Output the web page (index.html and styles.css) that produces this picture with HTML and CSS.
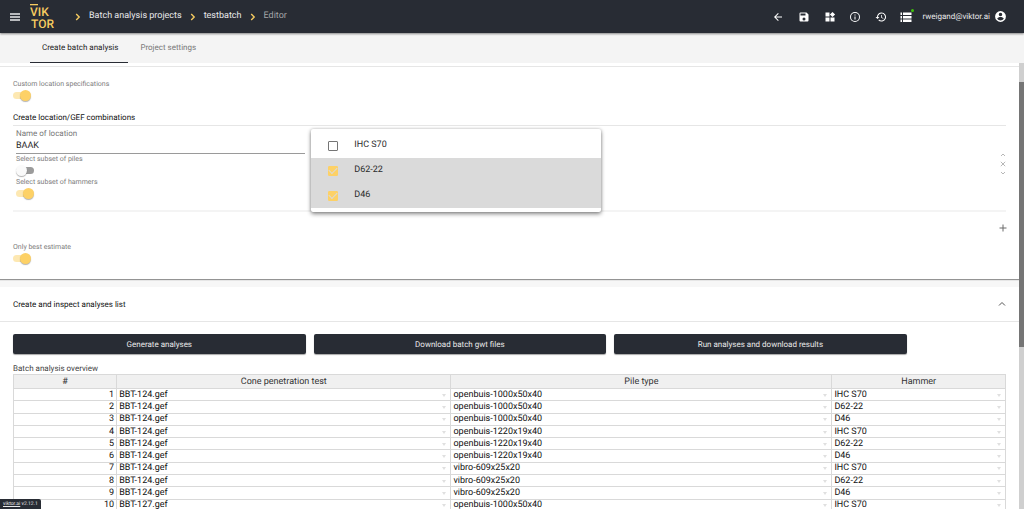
FILE: index.html
```html
<!DOCTYPE html>
<html lang="en">
<head>
<meta charset="utf-8">
<title>VIKTOR - testbatch</title>
<link rel="stylesheet" href="styles.css">
</head>
<body>
<header class="topbar">
  <button class="icon-btn menu-btn" aria-label="Menu"><svg viewBox="0 0 10 8"><path d="M0 1h10M0 4h10M0 7h10" stroke="#e8e9ea" stroke-width="1.3"/></svg></button>
  <a class="logo" href="#" aria-label="VIKTOR"><svg viewBox="0 0 28 32"><rect x="1" y="3" width="8" height="1.300"/><text x="1" y="15">VIK</text><text x="2" y="27">TOR</text></svg></a>
  <nav class="crumbs">
    <svg class="chev" viewBox="0 0 6 8"><path d="M1.200 1l3 3-3 3"/></svg>
    <a href="#">Batch analysis projects</a>
    <svg class="chev" viewBox="0 0 6 8"><path d="M1.200 1l3 3-3 3"/></svg>
    <a href="#">testbatch</a>
    <svg class="chev" viewBox="0 0 6 8"><path d="M1.200 1l3 3-3 3"/></svg>
    <span class="current">Editor</span>
  </nav>
  <div class="tools">
    <button class="icon-btn" aria-label="Back"><svg viewBox="0 0 24 24"><path d="M20 11H7.830l5.590-5.590L12 4l-8 8 8 8 1.410-1.410L7.830 13H20v-2z"/></svg></button>
    <button class="icon-btn" aria-label="Save"><svg viewBox="0 0 24 24"><path fill-rule="evenodd" d="M17 3H5a2 2 0 0 0-2 2v14a2 2 0 0 0 2 2h14a2 2 0 0 0 2-2V7l-4-4zm-5 16a3 3 0 1 1 0-6 3 3 0 0 1 0 6zm3-10H5V5h10v4z"/></svg></button>
    <button class="icon-btn" aria-label="Apps"><svg viewBox="0 0 24 24"><path d="M3 3h8v8H3zM3 13h8v8H3zM13 13h8v8h-8zM17 1.800L22.200 7 17 12.200 11.800 7z"/></svg></button>
    <button class="icon-btn" aria-label="Info"><svg viewBox="0 0 24 24"><path fill-rule="evenodd" d="M11 7h2v2h-2zm0 4h2v6h-2zm1-9a10 10 0 1 0 0 20 10 10 0 0 0 0-20zm0 18a8 8 0 1 1 0-16 8 8 0 0 1 0 16z"/></svg></button>
    <button class="icon-btn" aria-label="History"><svg viewBox="0 0 24 24"><path d="M13 3a9 9 0 0 0-9 9H1l3.890 3.890.070.140L9 12H6a7 7 0 1 1 2.060 4.940l-1.420 1.420A9 9 0 1 0 13 3zm-1 5v5l4.280 2.540.720-1.210-3.500-2.080V8H12z"/></svg></button>
    <button class="icon-btn jobs" aria-label="Jobs"><svg viewBox="0 0 24 24"><path d="M1 3h3v5H1zM6 3h17v5H6zM1 10h3v5H1zM6 10h17v5H6zM1 17h3v5H1zM6 17h17v5H6z"/></svg><span class="dot"></span></button>
  </div>
  <button class="account">rweigand@viktor.ai <svg viewBox="0 0 24 24"><path d="M12 2a10 10 0 1 0 0 20 10 10 0 0 0 0-20zm0 3a3 3 0 1 1 0 6.500 3 3 0 0 1 0-6.500zm0 14.200a7.200 7.200 0 0 1-6-3.220c.030-1.990 4-3.080 6-3.080s5.970 1.090 6 3.080a7.200 7.200 0 0 1-6 3.220z"/></svg></button>
</header>

<nav class="tabs">
  <a class="tab active" href="#">Create batch analysis</a>
  <a class="tab" href="#">Project settings</a>
</nav>

<div class="viewport">
  <main class="content">
    <section class="card">
      <div class="card-body">
        <label class="small" for="custom">Custom location specifications</label>
        <input class="toggle" id="custom" type="checkbox" checked>

        <h2 class="heading">Create location/GEF combinations</h2>
        <div class="row">
          <div class="fields">
            <div class="field">
              <label class="field-label" for="loc">Name of location</label>
              <input class="text" id="loc" type="text" value="BAAK">
              <label class="small" for="piles">Select subset of piles</label>
              <input class="toggle" id="piles" type="checkbox">
              <label class="small" for="hammers">Select subset of hammers</label>
              <input class="toggle" id="hammers" type="checkbox" checked>
            </div>
            <div class="field">
              <div class="menu">
                <label class="option"><input class="check" type="checkbox">IHC S70</label>
                <label class="option selected"><input class="check" type="checkbox" checked>D62-22</label>
                <label class="option selected"><input class="check" type="checkbox" checked>D46</label>
              </div>
            </div>
          </div>
          <div class="row-actions">
            <button class="icon-btn" aria-label="Move up"><svg viewBox="0 0 6 6"><path d="M1 4L3 2l2 2"/></svg></button>
            <button class="icon-btn" aria-label="Remove"><svg viewBox="0 0 6 6"><path d="M.8.8l4.400 4.400M5.200.8L.8 5.200"/></svg></button>
            <button class="icon-btn" aria-label="Move down"><svg viewBox="0 0 6 6"><path d="M1 2l2 2 2-2"/></svg></button>
          </div>
        </div>
        <button class="icon-btn add" aria-label="Add row"><svg viewBox="0 0 8 8"><path d="M4 .5v7M.5 4h7"/></svg></button>

        <label class="small" for="best">Only best estimate</label>
        <input class="toggle" id="best" type="checkbox" checked>
      </div>
    </section>

    <section class="card">
      <header class="card-head">
        <h2 class="title">Create and inspect analyses list</h2>
        <button class="icon-btn collapse" aria-label="Collapse"><svg viewBox="0 0 8 8"><path d="M1 5.500l3-3 3 3"/></svg></button>
      </header>
      <div class="list-body">
        <div class="buttons">
          <button class="primary">Generate analyses</button>
          <button class="primary">Download batch gwt files</button>
          <button class="primary">Run analyses and download results</button>
        </div>
        <table class="grid">
          <caption>Batch analysis overview</caption>
          <colgroup><col class="c-num"><col class="c-cpt"><col class="c-pile"><col class="c-hammer"></colgroup>
          <thead><tr><th>#</th><th>Cone penetration test</th><th>Pile type</th><th>Hammer</th></tr></thead>
          <tbody>
            <tr><td>1</td><td class="dd">BBT-124.gef</td><td class="dd">openbuis-1000x50x40</td><td class="dd">IHC S70</td></tr>
            <tr><td>2</td><td class="dd">BBT-124.gef</td><td class="dd">openbuis-1000x50x40</td><td class="dd">D62-22</td></tr>
            <tr><td>3</td><td class="dd">BBT-124.gef</td><td class="dd">openbuis-1000x50x40</td><td class="dd">D46</td></tr>
            <tr><td>4</td><td class="dd">BBT-124.gef</td><td class="dd">openbuis-1220x19x40</td><td class="dd">IHC S70</td></tr>
            <tr><td>5</td><td class="dd">BBT-124.gef</td><td class="dd">openbuis-1220x19x40</td><td class="dd">D62-22</td></tr>
            <tr><td>6</td><td class="dd">BBT-124.gef</td><td class="dd">openbuis-1220x19x40</td><td class="dd">D46</td></tr>
            <tr><td>7</td><td class="dd">BBT-124.gef</td><td class="dd">vibro-609x25x20</td><td class="dd">IHC S70</td></tr>
            <tr><td>8</td><td class="dd">BBT-124.gef</td><td class="dd">vibro-609x25x20</td><td class="dd">D62-22</td></tr>
            <tr><td>9</td><td class="dd">BBT-124.gef</td><td class="dd">vibro-609x25x20</td><td class="dd">D46</td></tr>
            <tr><td>10</td><td class="dd">BBT-127.gef</td><td class="dd">openbuis-1000x50x40</td><td class="dd">IHC S70</td></tr>
          </tbody>
        </table>
      </div>
    </section>
  </main>
  <div class="scrollbar"><div class="thumb"></div></div>
</div>

<footer class="version"><a href="#">viktor.ai</a> v2.12.1</footer>
</body>
</html>
```
FILE: styles.css
```css
* { box-sizing: border-box; }

body {
  margin: 0;
  height: 100vh;
  display: flex;
  flex-direction: column;
  overflow: hidden;
  font-family: Roboto, "Liberation Sans", sans-serif;
  font-size: 8px;
  line-height: 11px;
  text-rendering: geometricPrecision;
  color: #2b2b2b;
  background: #f7f7f7;
}

button, input { font: inherit; color: inherit; margin: 0; padding: 0; text-rendering: inherit; }
button { border: 0; background: none; cursor: pointer; }
a { color: inherit; text-decoration: none; }
h2 { margin: 0; font-size: 8px; font-weight: 400; color: #111; }
svg { display: block; }

/* Top bar */
.topbar {
  flex: none;
  display: flex;
  align-items: center;
  height: 33px;
  padding: 0 17px 0 10px;
  background: #282c34;
  color: #e8e9ea;
  box-shadow: 0 1px 2px rgba(0, 0, 0, .45);
  position: relative;
  z-index: 2;
}
.menu-btn svg { width: 10px; height: 8px; }
.logo { margin-left: 9px; }
.logo svg { width: 28px; height: 32px; fill: #f6cb60; font-size: 12px; font-weight: 500; }
.crumbs {
  display: flex;
  align-items: center;
  gap: 8px;
  margin-left: 18px;
  font-size: 9px;
  line-height: 13px;
}
.chev { width: 6px; height: 8px; fill: none; stroke: #f6cb60; stroke-width: 1.4; }
.current { color: #a2a4a8; }
.tools {
  display: flex;
  justify-content: space-between;
  width: 142px;
  margin-left: auto;
  fill: #fff;
}
.tools .icon-btn { width: 14px; }
.tools svg { width: 14px; height: 14px; padding: 1px; }
.jobs { position: relative; }
.dot {
  position: absolute;
  top: -1px;
  right: -1px;
  width: 3px;
  height: 3px;
  border-radius: 50%;
  background: #3fc20a;
}
.account {
  display: flex;
  align-items: center;
  gap: 4px;
  margin-left: 9px;
}
.account svg { width: 13px; height: 13px; fill: #fff; }

/* Tabs */
.tabs {
  flex: none;
  display: flex;
  height: 30px;
  padding-left: 30px;
  background: #f4f4f4;
  color: #777;
}
.tab {
  padding: 9px 10px 0 12px;
  border-bottom: 1px solid transparent;
}
.tab.active { color: #222; border-color: #282c34; }

/* Scrolling area */
.viewport { flex: 1; min-height: 0; display: flex; }
.content { flex: 1; min-width: 0; overflow: hidden; }
.scrollbar { width: 5px; padding-top: 19px; background: #cfcfcf; }
.thumb { height: 62%; background: #757575; }

.card {
  background: #fff;
  padding-top: 3px;
  margin-bottom: 8px;
  box-shadow: 0 1px 1px rgba(0, 0, 0, .4);
}
.card + .card { padding-top: 0; }
.card-body {
  display: flex;
  flex-direction: column;
  align-items: flex-start;
  padding: 12px 13px 14px;
  border-top: 1px solid #e6e6e6;
}
.small { display: block; font-size: 7px; line-height: 11px; color: #7d7d7d; }

.toggle {
  appearance: none;
  display: block;
  position: relative;
  width: 18px;
  height: 14px;
  margin: -1px 0;
}
.toggle::before, .toggle::after { content: ""; position: absolute; }
.toggle::before {
  left: 1px;
  top: 3px;
  width: 17px;
  height: 7px;
  border-radius: 4px;
  background: #9b9b9b;
}
.toggle::after {
  left: 0;
  top: 1px;
  width: 11px;
  height: 11px;
  border-radius: 50%;
  background: #fafafa;
  box-shadow: 0 1px 1px rgba(0, 0, 0, .3);
}
.toggle:checked::before { left: 0; background: #fde8b2; }
.toggle:checked::after { left: 7px; background: #fdd166; }

.heading {
  align-self: stretch;
  margin-top: 10px;
  padding-bottom: 2px;
  border-bottom: 1px solid #e6e6e6;
}
.row {
  align-self: stretch;
  display: flex;
  align-items: center;
  padding: 2px 0 10px 3px;
  border-bottom: 2px solid #f4f4f4;
}
.fields {
  flex: 1;
  display: grid;
  grid-template-columns: repeat(2, 29.4%);
  gap: 6px;
}
.field { position: relative; }
.field-label { display: block; color: #777; }
.text {
  display: block;
  width: 100%;
  height: 15px;
  padding-bottom: 1px;
  border: 0;
  border-bottom: 1px solid #9a9a9a;
  background: none;
  font-size: 9px;
  line-height: 13px;
}
.row-actions { display: flex; flex-direction: column; gap: 3px; }
.row-actions svg { width: 6px; height: 6px; fill: none; stroke: #a5a5a5; stroke-width: .8; }
.add { align-self: flex-end; margin: 12px -1px 10px 0; }
.add svg { width: 8px; height: 8px; stroke: #6b6b6b; stroke-width: 1; }

/* Open hammer selection */
.menu {
  position: absolute;
  top: 1px;
  left: 0;
  right: 0;
  padding: 4px 0;
  border-radius: 2px;
  background: #fff;
  font-size: 9px;
  line-height: 13px;
  box-shadow: 0 2px 4px rgba(0, 0, 0, .45), 0 0 3px rgba(0, 0, 0, .2);
}
.option {
  display: flex;
  align-items: center;
  gap: 16px;
  height: 25px;
  padding-left: 17px;
}
.option.selected { background: #dadada; }
.check {
  appearance: none;
  display: flex;
  align-items: center;
  justify-content: center;
  width: 10px;
  height: 10px;
  border: 1px solid #757575;
  border-radius: 1px;
}
.check:checked { border-color: #fdd166; background: #fdd166; }
.check:checked::before {
  content: "";
  width: 7px;
  height: 4px;
  margin-bottom: 2px;
  border: solid #dadada;
  border-width: 0 0 1px 1px;
  transform: rotate(-45deg);
}

/* Analyses list */
.card-head {
  display: flex;
  align-items: center;
  justify-content: space-between;
  height: 35px;
  padding: 0 13px;
  border-bottom: 1px solid #e6e6e6;
}
.collapse svg { width: 8px; height: 8px; fill: none; stroke: #555; stroke-width: 1; }
.list-body { padding: 12px 13px; }
.buttons {
  display: grid;
  grid-template-columns: repeat(3, 1fr);
  gap: 8px;
  width: 90%;
}
.primary {
  height: 20px;
  border-radius: 2px;
  background: #282c34;
  color: #e8e9ea;
  box-shadow: 0 1px 1px rgba(0, 0, 0, .35);
}
.grid {
  width: 100%;
  height: 138px;
  margin-top: 9px;
  border-collapse: collapse;
  table-layout: fixed;
  font-size: 9px;
}
.grid caption { text-align: left; color: #444; font-size: 8px; }
.c-num { width: 10.4%; }
.c-cpt { width: 33.7%; }
.c-pile { width: 38.4%; }
.grid th, .grid td { padding: 0 2px; border: 1px solid #d9d9d9; line-height: 10px; }
.grid th { height: 14px; background: #f0f0f0; font-weight: 400; color: #333; }
.grid td { color: #111; }
.grid td:first-child { text-align: right; }
.dd::after {
  content: "";
  float: right;
  margin: 4px 2px 0 0;
  border: 2px solid transparent;
  border-top: 3px solid #e0e0e0;
  border-bottom: 0;
}

.version {
  position: fixed;
  left: 0;
  bottom: 0;
  z-index: 3;
  padding: 0 3px;
  border-top-right-radius: 2px;
  background: #282c34;
  color: #e8e9ea;
  font-size: 5px;
  line-height: 10px;
}
.version a { text-decoration: underline; }
```
